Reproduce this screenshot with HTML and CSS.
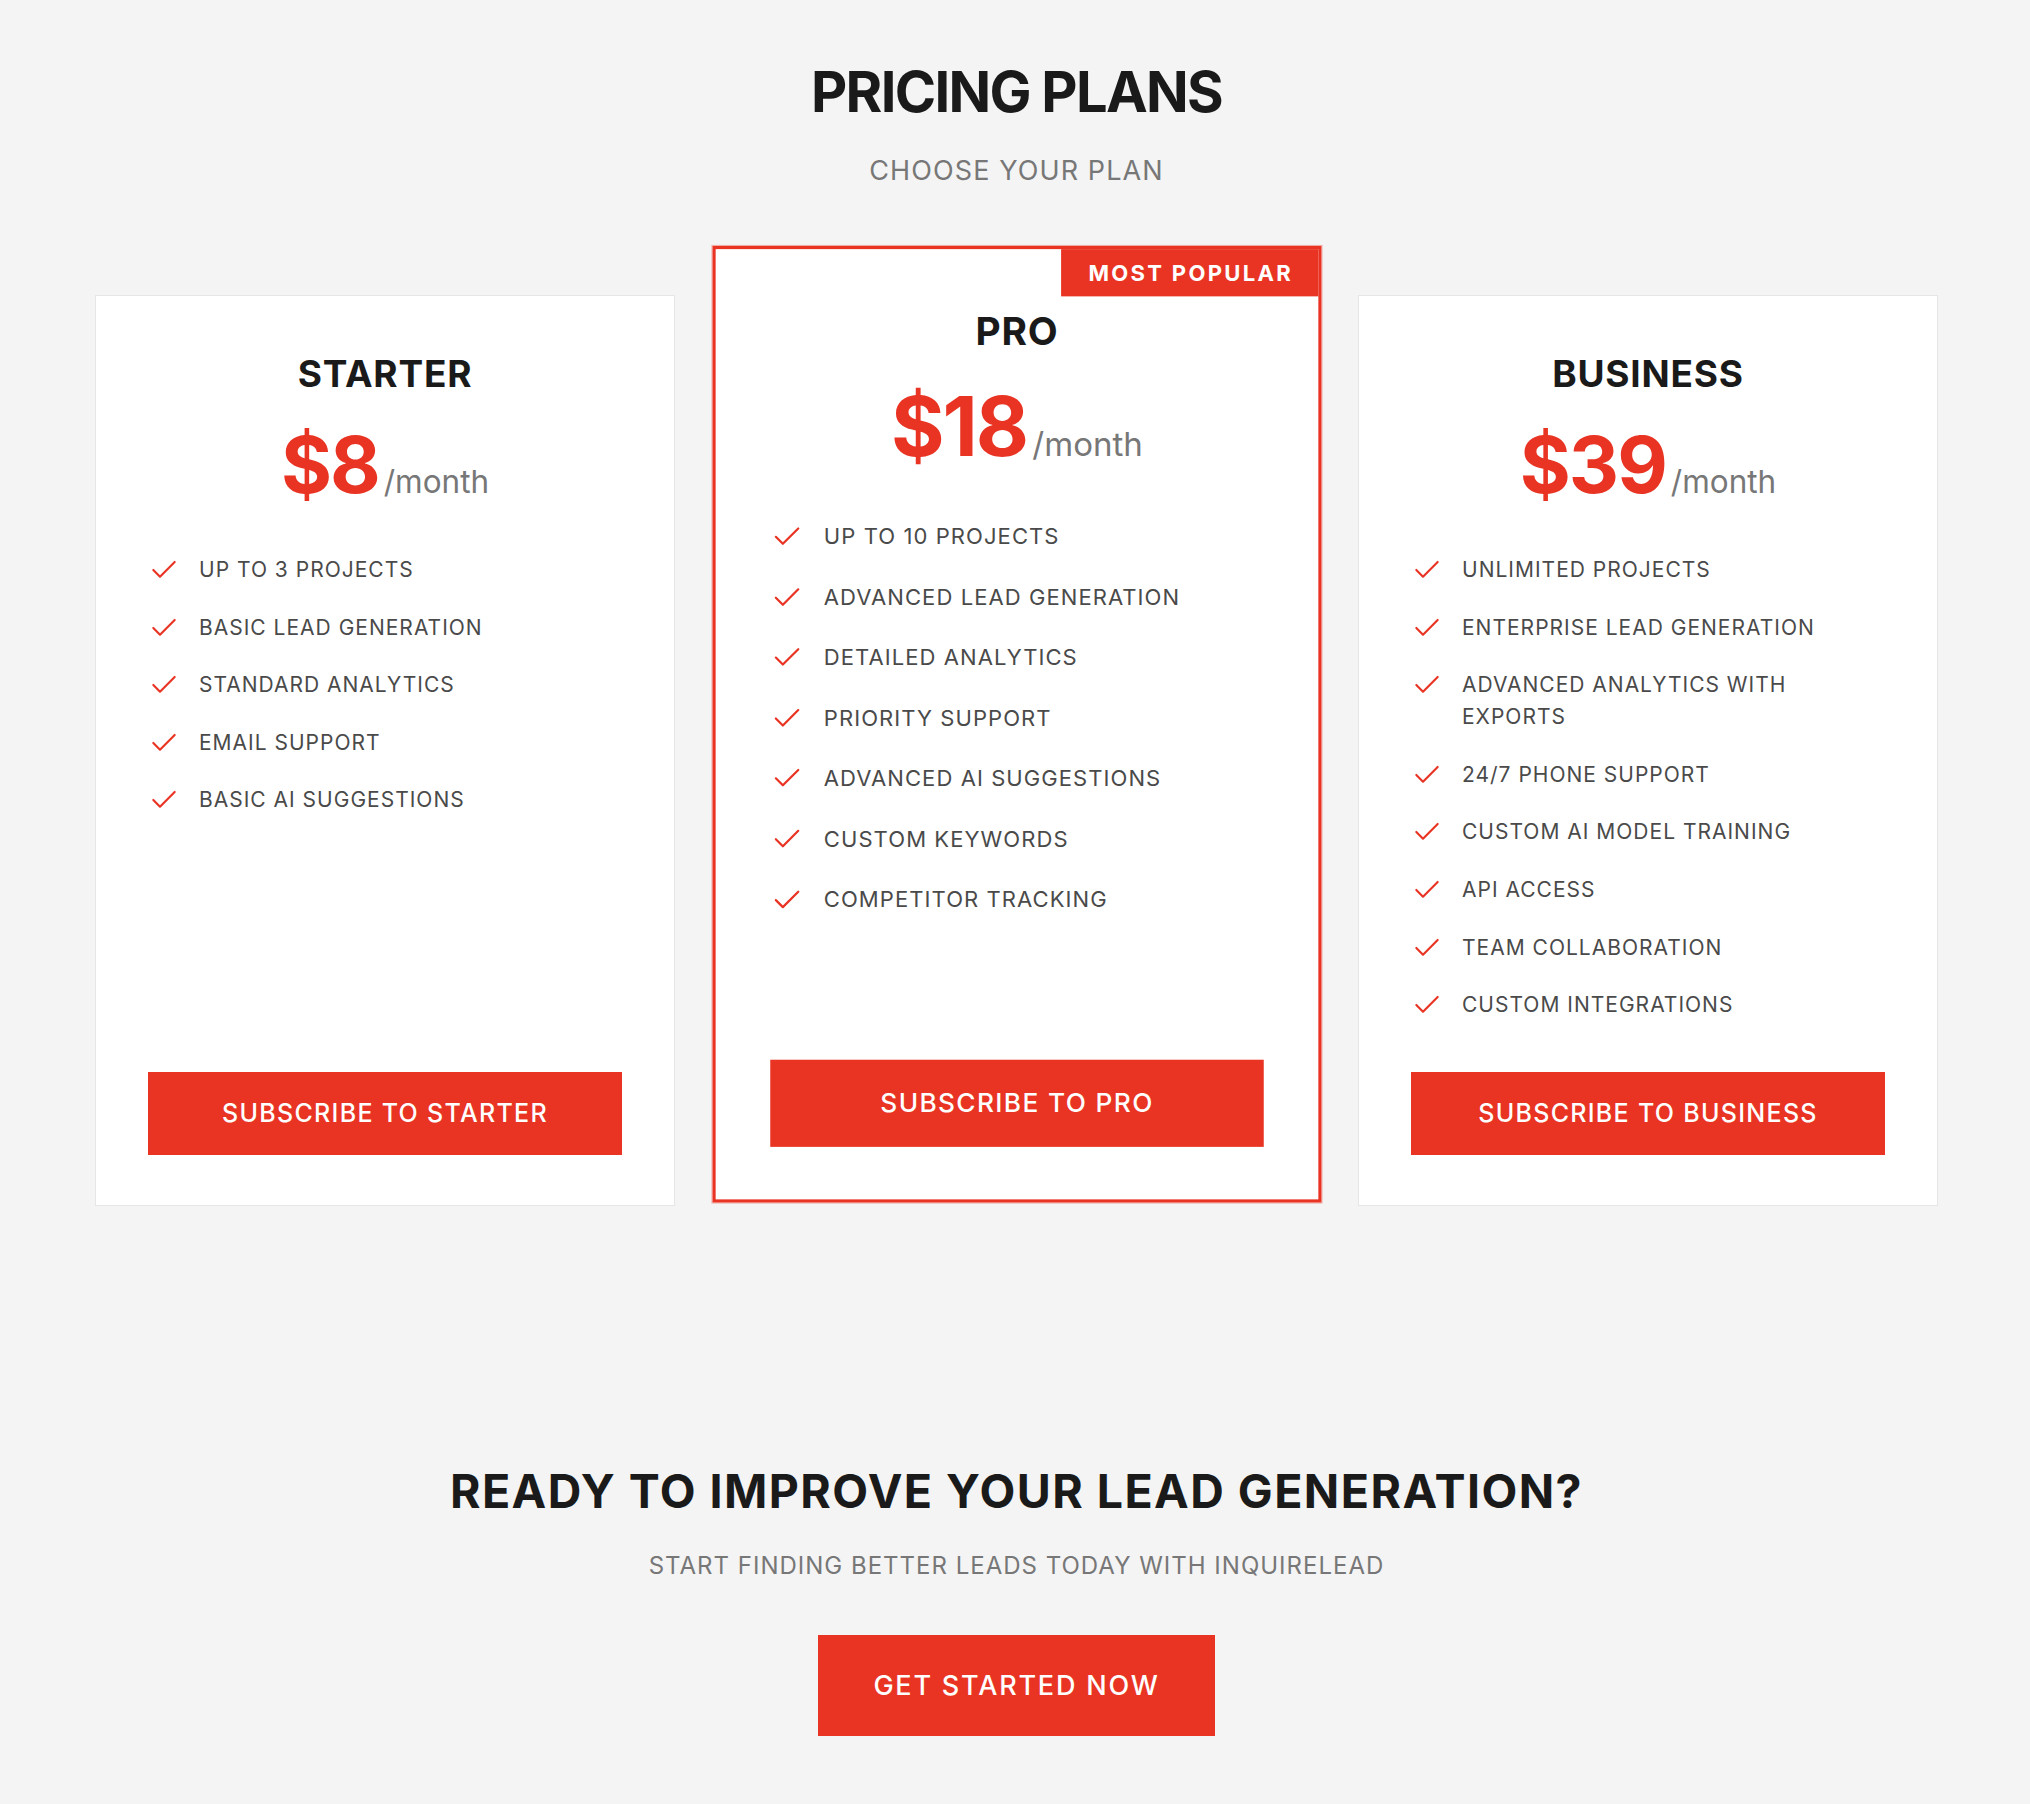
FILE: index.html
```html
<!DOCTYPE html>
<html lang="en">
<head>
<meta charset="utf-8">
<title>Pricing Plans</title>
<link rel="stylesheet" href="styles.css">
</head>
<body>
<section class="pricing">
  <h1 class="pricing-title">PRICING PLANS</h1>
  <p class="pricing-sub">CHOOSE YOUR PLAN</p>
  <div class="plans">
    <div class="card">
      <h2 class="plan-name">STARTER</h2>
      <div class="price"><span class="amount">$8</span><span class="per">/month</span></div>
      <ul class="features">
        <li><svg class="check" viewBox="0 0 24 24"><path d="M20 6 9 17l-5-5"/></svg><span>UP TO 3 PROJECTS</span></li>
        <li><svg class="check" viewBox="0 0 24 24"><path d="M20 6 9 17l-5-5"/></svg><span>BASIC LEAD GENERATION</span></li>
        <li><svg class="check" viewBox="0 0 24 24"><path d="M20 6 9 17l-5-5"/></svg><span>STANDARD ANALYTICS</span></li>
        <li><svg class="check" viewBox="0 0 24 24"><path d="M20 6 9 17l-5-5"/></svg><span>EMAIL SUPPORT</span></li>
        <li><svg class="check" viewBox="0 0 24 24"><path d="M20 6 9 17l-5-5"/></svg><span>BASIC AI SUGGESTIONS</span></li>
      </ul>
      <a class="btn" href="#">SUBSCRIBE TO STARTER</a>
    </div>
    <div class="card popular">
      <div class="badge">MOST POPULAR</div>
      <h2 class="plan-name">PRO</h2>
      <div class="price"><span class="amount">$18</span><span class="per">/month</span></div>
      <ul class="features">
        <li><svg class="check" viewBox="0 0 24 24"><path d="M20 6 9 17l-5-5"/></svg><span>UP TO 10 PROJECTS</span></li>
        <li><svg class="check" viewBox="0 0 24 24"><path d="M20 6 9 17l-5-5"/></svg><span>ADVANCED LEAD GENERATION</span></li>
        <li><svg class="check" viewBox="0 0 24 24"><path d="M20 6 9 17l-5-5"/></svg><span>DETAILED ANALYTICS</span></li>
        <li><svg class="check" viewBox="0 0 24 24"><path d="M20 6 9 17l-5-5"/></svg><span>PRIORITY SUPPORT</span></li>
        <li><svg class="check" viewBox="0 0 24 24"><path d="M20 6 9 17l-5-5"/></svg><span>ADVANCED AI SUGGESTIONS</span></li>
        <li><svg class="check" viewBox="0 0 24 24"><path d="M20 6 9 17l-5-5"/></svg><span>CUSTOM KEYWORDS</span></li>
        <li><svg class="check" viewBox="0 0 24 24"><path d="M20 6 9 17l-5-5"/></svg><span>COMPETITOR TRACKING</span></li>
      </ul>
      <a class="btn" href="#">SUBSCRIBE TO PRO</a>
    </div>
    <div class="card">
      <h2 class="plan-name">BUSINESS</h2>
      <div class="price"><span class="amount">$39</span><span class="per">/month</span></div>
      <ul class="features">
        <li><svg class="check" viewBox="0 0 24 24"><path d="M20 6 9 17l-5-5"/></svg><span>UNLIMITED PROJECTS</span></li>
        <li><svg class="check" viewBox="0 0 24 24"><path d="M20 6 9 17l-5-5"/></svg><span>ENTERPRISE LEAD GENERATION</span></li>
        <li><svg class="check" viewBox="0 0 24 24"><path d="M20 6 9 17l-5-5"/></svg><span>ADVANCED ANALYTICS WITH EXPORTS</span></li>
        <li><svg class="check" viewBox="0 0 24 24"><path d="M20 6 9 17l-5-5"/></svg><span>24/7 PHONE SUPPORT</span></li>
        <li><svg class="check" viewBox="0 0 24 24"><path d="M20 6 9 17l-5-5"/></svg><span>CUSTOM AI MODEL TRAINING</span></li>
        <li><svg class="check" viewBox="0 0 24 24"><path d="M20 6 9 17l-5-5"/></svg><span>API ACCESS</span></li>
        <li><svg class="check" viewBox="0 0 24 24"><path d="M20 6 9 17l-5-5"/></svg><span>TEAM COLLABORATION</span></li>
        <li><svg class="check" viewBox="0 0 24 24"><path d="M20 6 9 17l-5-5"/></svg><span>CUSTOM INTEGRATIONS</span></li>
      </ul>
      <a class="btn" href="#">SUBSCRIBE TO BUSINESS</a>
    </div>
  </div>
</section>
<section class="cta">
  <h2 class="cta-title">READY TO IMPROVE YOUR LEAD GENERATION?</h2>
  <p class="cta-sub">START FINDING BETTER LEADS TODAY WITH INQUIRELEAD</p>
  <a class="cta-btn" href="#">GET STARTED NOW</a>
</section>
</body>
</html>
```
FILE: styles.css
```css
html, body {
  margin: 0;
}
body {
  padding-left: 3px;
  background: #f4f4f4;
  font-family: Inter, "Noto Sans", "Liberation Sans", sans-serif;
  color: #1a1a1a;
}
.pricing {
  padding-top: 59px;
  text-align: center;
}
.pricing-title {
  margin: 0;
  font-size: 56px;
  line-height: 67px;
  font-weight: 700;
  letter-spacing: -1.7px;
  color: #1a1a1a;
}
.pricing-sub {
  margin: 27px 0 0;
  font-size: 27px;
  line-height: 36px;
  letter-spacing: 1.1px;
  color: #777;
}
.plans {
  display: grid;
  grid-template-columns: repeat(3, 580px);
  column-gap: 51.5px;
  justify-content: center;
  margin-top: 106px;
}
.card {
  position: relative;
  display: flex;
  flex-direction: column;
  background: #fff;
  border: 1px solid #e6e6e6;
  padding: 56px 52px 50px;
  text-align: left;
}
.card.popular {
  border: 3px solid #e93424;
  box-shadow: 0 0 0 1px rgba(233, 52, 36, 0.35);
  transform: scale(1.05) translateY(-25px);
  z-index: 1;
}
.badge {
  position: absolute;
  top: 0;
  right: 0;
  background: #e93424;
  color: #fff;
  font-size: 21px;
  line-height: 25px;
  font-weight: 700;
  letter-spacing: 2.2px;
  padding: 10px 24px 10px 26px;
}
.plan-name {
  margin: 0;
  text-align: center;
  font-size: 37px;
  line-height: 44px;
  font-weight: 700;
  letter-spacing: 0.8px;
  color: #1a1a1a;
}
.price {
  display: flex;
  justify-content: center;
  align-items: baseline;
  margin-top: 30px;
}
.amount {
  font-size: 78px;
  line-height: 78px;
  font-weight: 700;
  letter-spacing: -2px;
  color: #e93424;
}
.per {
  margin-left: 5px;
  font-size: 31.5px;
  line-height: 36px;
  color: #777;
}
.features {
  flex: 1;
  list-style: none;
  margin: 50px 0 51px;
  padding: 0;
  display: flex;
  flex-direction: column;
  gap: 25.6px;
}
.features li {
  display: flex;
  align-items: flex-start;
  gap: 19px;
  font-size: 21px;
  line-height: 32px;
  letter-spacing: 1px;
  color: #4a4a4a;
}
.check {
  flex: none;
  width: 32px;
  height: 32px;
  fill: none;
  stroke: #e93424;
  stroke-width: 1.6;
  stroke-linecap: round;
  stroke-linejoin: round;
}
.btn {
  display: block;
  background: #e93424;
  color: #fff;
  text-align: center;
  text-decoration: none;
  font-size: 25px;
  line-height: 29px;
  font-weight: 500;
  letter-spacing: 1.3px;
  padding: 27px 0;
}
.cta {
  text-align: center;
  padding: 258px 0 67px;
}
.cta-title {
  margin: 0;
  font-size: 46.5px;
  line-height: 55px;
  font-weight: 700;
  letter-spacing: 1.45px;
  color: #1a1a1a;
}
.cta-sub {
  margin: 30px 0 0;
  font-size: 24px;
  line-height: 34px;
  letter-spacing: 1px;
  color: #777;
}
.cta-btn {
  display: inline-block;
  vertical-align: top;
  margin-top: 52px;
  padding: 35px 55px;
  background: #e93424;
  color: #fff;
  text-decoration: none;
  font-size: 27px;
  line-height: 31px;
  font-weight: 500;
  letter-spacing: 1.8px;
}
```
